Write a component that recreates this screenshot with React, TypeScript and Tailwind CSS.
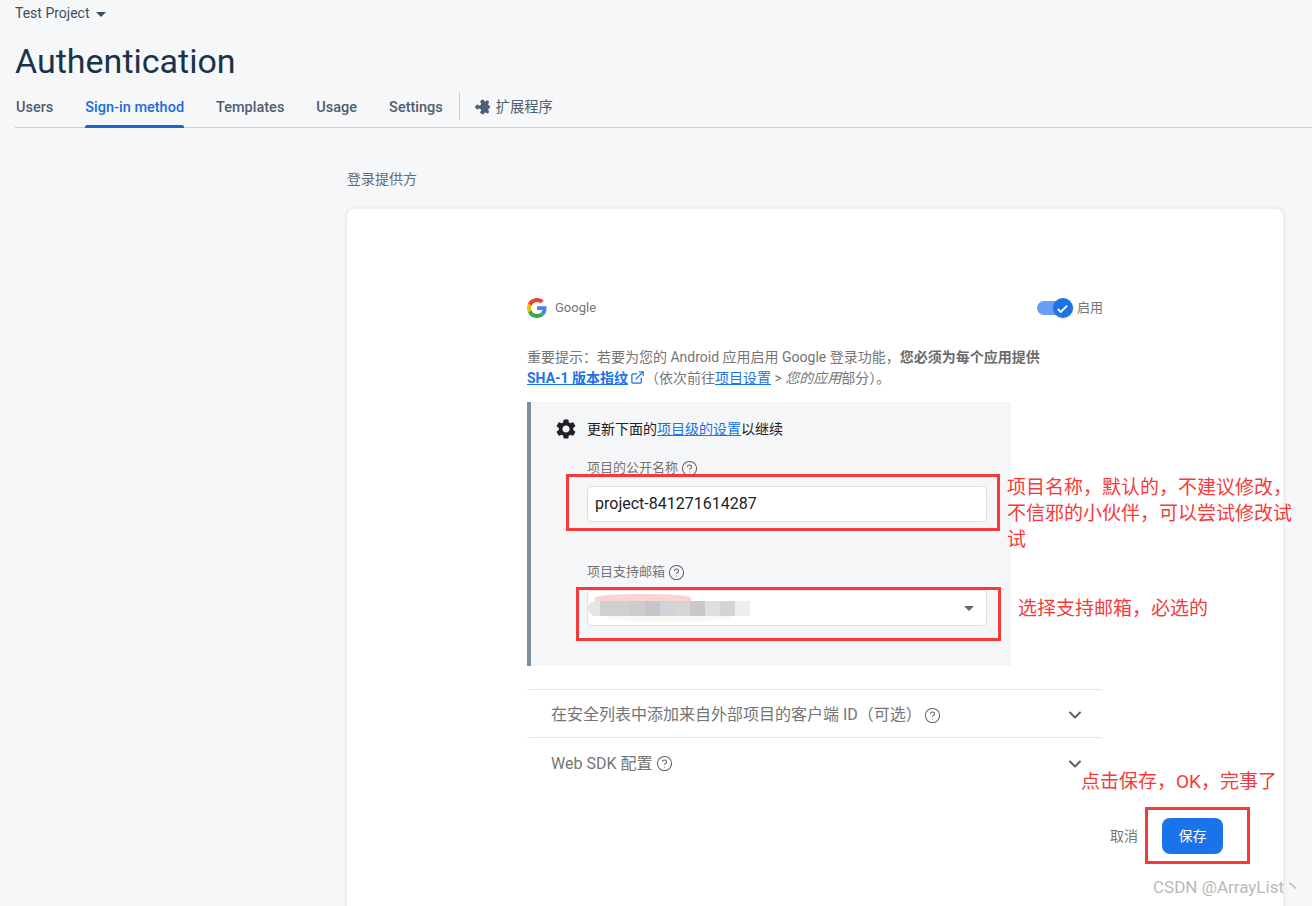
import { ChevronDown, ExternalLink, CircleHelp } from "lucide-react";

const cjk = "font-['Roboto','Noto_Sans_CJK_SC',sans-serif]";

const tabs = ["Users", "Sign-in method", "Templates", "Usage", "Settings"];
const blur = ["bg-[#cfd1cc]", "bg-[#cbd2d0]", "bg-[#cfcccb]", "bg-[#c9c5c6]", "bg-[#d0d3d7]", "bg-[#d5d6d1]", "bg-[#c8c8ca]", "bg-[#dfdfdf]", "bg-[#d3d4d6]", "bg-[#eeeeee]"];

function Help() {
  return <CircleHelp className="w-[17px] h-[17px] text-[#5f6368]" strokeWidth={1.5} />;
}

function GoogleLogo() {
  return (
    <svg viewBox="0 0 48 48" className="w-[20px] h-[20px]">
      <path fill="#EA4335" d="M24 9.5c3.54 0 6.71 1.22 9.21 3.6l6.85-6.85C35.9 2.38 30.47 0 24 0 14.62 0 6.51 5.38 2.56 13.22l7.98 6.19C12.43 13.72 17.74 9.5 24 9.5z" />
      <path fill="#4285F4" d="M46.98 24.55c0-1.57-.15-3.09-.38-4.55H24v9.02h12.94c-.58 2.96-2.26 5.48-4.78 7.18l7.73 6c4.51-4.18 7.09-10.36 7.09-17.65z" />
      <path fill="#FBBC05" d="M10.53 28.59c-.48-1.45-.76-2.99-.76-4.59s.27-3.14.76-4.59l-7.98-6.19C.92 16.46 0 20.12 0 24c0 3.88.92 7.54 2.56 10.78l7.97-6.19z" />
      <path fill="#34A853" d="M24 48c6.48 0 11.93-2.13 15.89-5.81l-7.73-6c-2.15 1.45-4.92 2.3-8.16 2.3-6.26 0-11.57-4.22-13.47-9.91l-7.98 6.19C6.51 42.62 14.62 48 24 48z" />
    </svg>
  );
}

function RedBox({ className }: { className: string }) {
  return <div className={`absolute border-[3px] border-[#f63a3a] ${className}`} />;
}

function Note({ className, children }: { className: string; children: React.ReactNode }) {
  return <div className={`absolute text-[#f63a3a] text-[19px] leading-[26px] ${className}`}>{children}</div>;
}

export default function App() {
  return (
    <div className={`relative h-[906px] overflow-hidden bg-[#f6f7f9] ${cjk}`}>
      {/* header */}
      <div className="pl-[15px]">
        <div className="flex items-center h-[26px] text-[14px] text-[#3c4f61]">
          Test Project
          <span className="ml-[7px] mt-[2px] border-x-[5px] border-t-[5px] border-x-transparent border-t-[#3c4f61]" />
        </div>
        <h1 className="mt-[13px] text-[34px] leading-[44px] text-[#1b3349]">Authentication</h1>
        <div className="mt-[3px] flex items-stretch h-[42px] border-b border-[#c5cfdc]">
          {tabs.map((t) => (
            <div
              key={t}
              className={`relative mr-[32px] pt-[11px] text-[14.5px] font-medium first:ml-px ${t === "Sign-in method" ? "text-[#1a6dd8]" : "text-[#4f5d6e]"}`}
            >
              {t}
              {t === "Sign-in method" && <div className="absolute left-0 right-0 -bottom-px h-[3px] bg-[#1a66d2] rounded-t-[2px]" />}
            </div>
          ))}
          <div className="-ml-[16px] mt-[6px] mb-[7px] w-px bg-[#c5cfdc]" />
          <div className="ml-[16px] pt-[11px] flex items-start gap-[4px] text-[14.25px] text-[#4f5d6e]">
            <svg viewBox="0 0 24 24" className="w-[16px] h-[16px] mt-[2px] rotate-45 fill-[#4a5f78]">
              <path d="M20.5 11H19V7c0-1.1-.9-2-2-2h-4V3.5C13 2.12 11.88 1 10.5 1S8 2.12 8 3.5V5H4c-1.1 0-1.99.9-1.99 2v3.8H3.5c1.49 0 2.7 1.21 2.7 2.7s-1.21 2.7-2.7 2.7H2V20c0 1.1.9 2 2 2h3.8v-1.5c0-1.49 1.21-2.7 2.7-2.7 1.49 0 2.7 1.21 2.7 2.7V22H17c1.1 0 2-.9 2-2v-4h1.5c1.38 0 2.5-1.12 2.5-2.5S21.88 11 20.5 11z" />
            </svg>
            扩展程序
          </div>
        </div>
      </div>

      {/* main */}
      <div className="pl-[347px] pr-[29px]">
        <div className="mt-[42px] text-[14px] leading-[18px] text-[#5f6b78]">登录提供方</div>
        <div className="-mx-px mt-[20px] h-[720px] bg-white rounded-[8px] border border-[#eceef1] shadow-[0_0_4px_rgba(0,0,0,0.08)] pl-[180px] pr-[180px] pt-[86px]">
          <div className="flex items-center justify-between h-[26px]">
            <div className="flex items-center gap-[8px] text-[13px] text-[#757575]">
              <GoogleLogo />
              Google
            </div>
            <div className="flex items-center text-[13px] text-[#757575]">
              <div className="relative w-[36px] h-[14px] rounded-full bg-[#669df6]">
                <div className="absolute right-0 -top-[3px] w-[20px] h-[20px] rounded-full bg-[#1a73e8] shadow flex items-center justify-center">
                  <svg viewBox="0 0 16 16" className="w-[15px] h-[15px] fill-none stroke-white stroke-2">
                    <path d="M3 8.5l3.2 3.2L13 5" />
                  </svg>
                </div>
              </div>
              <span className="ml-[4px]">启用</span>
            </div>
          </div>

          <p className="mt-[26px] text-[14px] leading-[21px] text-[#757575]">
            重要提示：若要为您的 Android 应用启用 Google 登录功能，<b className="font-bold text-[#6b6b6b]">您必须为每个应用提供</b>
            <br />
            <a className="font-bold text-[#1a73e8] underline">SHA-1 版本指纹</a>
            <ExternalLink className="inline w-[15px] h-[15px] ml-[2px] align-[-2px] text-[#1a73e8]" />
            （依次前往<a className="text-[#1a73e8] underline">项目设置</a> &gt; <i>您的应用</i>部分）。
          </p>

          {/* settings box */}
          <div className="mt-[13px] w-[484px] h-[264px] bg-[#f5f6f8] border-l-[4px] border-[#7d8f9d] pl-[23px] pt-[16px]">
            <div className="flex items-center gap-[9px] h-[22px] text-[14px] text-[#202124]">
              <svg viewBox="0 0 24 24" className="w-[24px] h-[24px] fill-[#202124]">
                <path d="M19.14 12.94c.04-.3.06-.61.06-.94 0-.32-.02-.64-.07-.94l2.03-1.58c.18-.14.23-.41.12-.61l-1.92-3.32c-.12-.22-.37-.29-.59-.22l-2.39.96c-.5-.38-1.03-.7-1.62-.94l-.36-2.54c-.04-.24-.24-.41-.48-.41h-3.84c-.24 0-.43.17-.47.41l-.36 2.54c-.59.24-1.13.57-1.62.94l-2.39-.96c-.22-.08-.47 0-.59.22L2.74 8.87c-.12.21-.08.47.12.61l2.03 1.58c-.05.3-.09.63-.09.94s.02.64.07.94l-2.03 1.58c-.18.14-.23.41-.12.61l1.92 3.32c.12.22.37.29.59.22l2.39-.96c.5.38 1.03.7 1.62.94l.36 2.54c.05.24.24.41.48.41h3.84c.24 0 .44-.17.47-.41l.36-2.54c.59-.24 1.13-.56 1.62-.94l2.39.96c.22.08.47 0 .59-.22l1.92-3.32c.12-.22.07-.47-.12-.61l-2.01-1.58zM12 15.6c-1.98 0-3.6-1.62-3.6-3.6s1.62-3.6 3.6-3.6 3.6 1.62 3.6 3.6-1.62 3.6-3.6 3.6z" />
              </svg>
              <span>
                更新下面的<a className="text-[#1a73e8] underline">项目级的设置</a>以继续
              </span>
            </div>
            <div className="ml-[33px] mr-[24px]">
              <div className="mt-[19px] flex items-center gap-[3px] h-[18px] text-[13px] text-[#757575]">
                项目的公开名称 <Help />
              </div>
              <div className="mt-[9px] h-[36px] flex items-center px-[7px] bg-white border border-[#dfe1e5] rounded-[4px] text-[16px] text-[#202124]">
                project-841271614287
              </div>
              <div className="mt-[41px] flex items-center gap-[3px] h-[18px] text-[13px] text-[#757575]">
                项目支持邮箱 <Help />
              </div>
              <div className="relative mt-[9px] h-[36px] flex items-center justify-between pr-[12px] bg-white border border-[#dfe1e5] rounded-[4px]">
                <div className="absolute left-[7px] top-[3px] w-[96px] h-[7px] rounded-t-[50%] bg-[#f9d4d4]" />
                <div className="absolute left-[20px] top-[24px] w-[122px] h-[7px] rounded-b-[50%] bg-[#f8f8f6]" />
                <div className="relative flex h-[15px]">
                  <div className="w-[12px] rounded-l-[8px] bg-[#e3e6e3]" />
                  {blur.map((c, i) => (
                    <div key={i} className={`w-[15px] ${c}`} />
                  ))}
                </div>
                <span className="border-x-[5px] border-t-[5px] border-x-transparent border-t-[#666]" />
              </div>
            </div>
          </div>

          {/* expanders */}
          <div className="mt-[23px] h-[48px] pt-[3px] flex items-center justify-between pl-[24px] pr-[18px] border-t border-[#e3e4e6] rounded-t-[4px] text-[16px] text-[#757575]">
            <span className="flex items-center">
              在安全列表中添加来自外部项目的客户端 ID（可选）
              <span className="ml-[2px]">
                <Help />
              </span>
            </span>
            <ChevronDown className="w-[20px] h-[20px] text-[#5f6368]" strokeWidth={2.5} />
          </div>
          <div className="h-[48px] pt-[4px] flex items-center justify-between pl-[24px] pr-[18px] border-t border-[#e3e4e6] rounded-t-[4px] text-[16px] text-[#757575]">
            <span className="flex items-center gap-[4px]">
              Web SDK 配置 <Help />
            </span>
            <ChevronDown className="w-[20px] h-[20px] text-[#5f6368]" strokeWidth={2.5} />
          </div>

          <div className="mt-[33px] flex items-center justify-end gap-[24px] mr-[-120px] text-[14px]">
            <span className="text-[#757575]">取消</span>
            <button className="w-[61px] h-[36px] rounded-[8px] bg-[#1a73e8] text-white">保存</button>
          </div>
        </div>
      </div>

      {/* annotations */}
      <RedBox className="left-[566px] top-[474px] w-[434px] h-[57px]" />
      <RedBox className="left-[576px] top-[587px] w-[425px] h-[54px]" />
      <RedBox className="left-[1145px] top-[807px] w-[105px] h-[57px]" />
      <Note className="left-[1007px] top-[475px] w-[290px] leading-[26.5px]">项目名称，默认的，不建议修改，不信邪的小伙伴，可以尝试修改试试</Note>
      <Note className="left-[1018px] top-[596px]">选择支持邮箱，必选的</Note>
      <Note className="left-[1081px] top-[769px]">点击保存，OK，完事了</Note>
      <div className="absolute left-[1153px] top-[877px] text-[17px] leading-[20px] text-[#b9b9b9]">CSDN @ArrayList丶</div>
    </div>
  );
}
